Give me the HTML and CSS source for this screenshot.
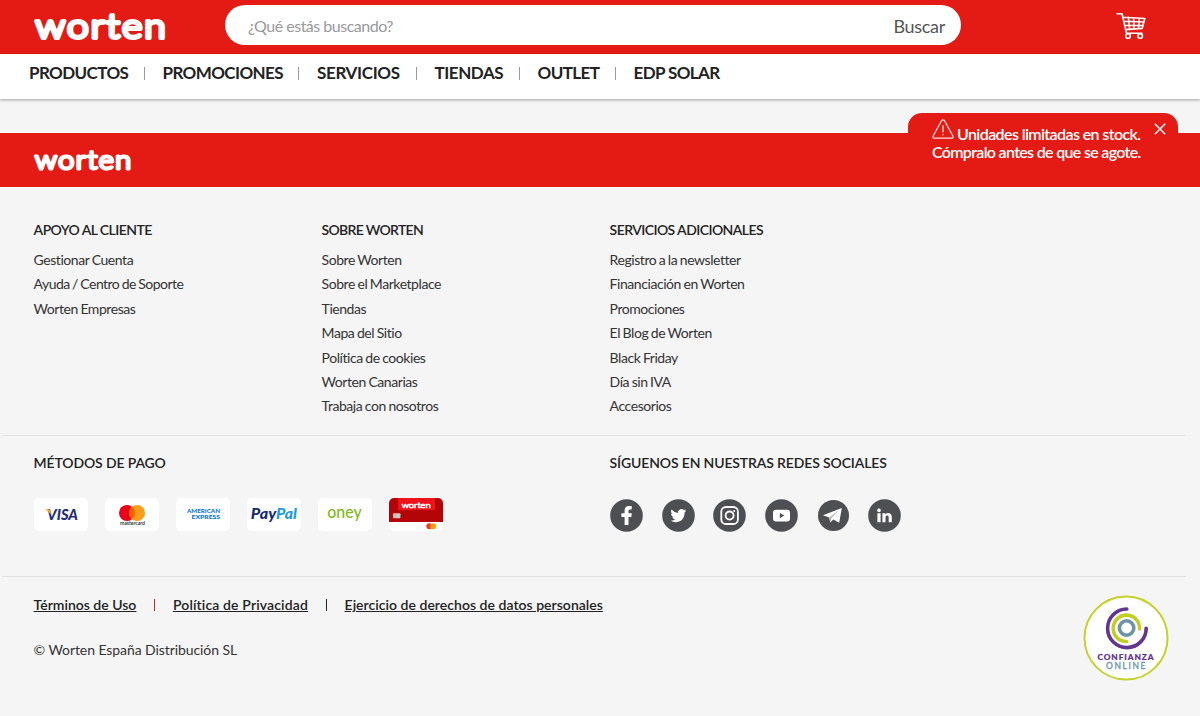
FILE: index.html
```html
<!DOCTYPE html>
<html lang="es">
<head>
<meta charset="utf-8">
<title>Worten</title>
<link rel="stylesheet" href="styles.css">
</head>
<body>
<header class="header">
  <svg class="logo" width="140" height="46" viewBox="0 0 140 46"><text class="wordmark" x="3.6" y="33.6" font-size="34" stroke-width="4" letter-spacing="1.8" textLength="132" lengthAdjust="spacingAndGlyphs">worten</text></svg>
  <div class="search"><span class="search-hint">¿Qué estás buscando?</span><span class="search-button">Buscar</span></div>
  <svg class="cart" width="30" height="28" viewBox="0 0 30 28" fill="none" stroke="#fff" stroke-width="1.6" stroke-linecap="round" stroke-linejoin="round">
    <path d="M1 1.7H6L10.6 21.2H26M6.8 5.2L28.8 6.5L26.2 16.4L9.4 17.6M7.8 9.3L28 10M8.6 13.5L27 13.3M12.4 5.6L13.6 17M17.6 6L18 17M23.4 6.3L22.4 16.6"/>
    <circle cx="12" cy="24" r="2.3"/><circle cx="24.2" cy="24" r="2.3"/>
  </svg>
</header>
<nav class="nav">
  <a class="n1">PRODUCTOS</a><a class="n2">PROMOCIONES</a><a class="n3">SERVICIOS</a><a class="n4">TIENDAS</a><a class="n5">OUTLET</a><a class="n6">EDP SOLAR</a>
</nav>
<aside class="notice">
  <svg class="warning" width="22" height="20" viewBox="0 0 22 20" fill="none" stroke="#fff" stroke-opacity=".85" stroke-width="1.3" stroke-linejoin="round" stroke-linecap="round"><path d="M9.5 1.7Q11 .1 12.5 1.7L20.9 17Q21.6 18.9 20 19.1H2Q.4 18.9 1.1 17ZM11 6.8V12.8M11 15.3V15.8"/></svg>
  <p class="notice-first">Unidades limitadas en stock.</p>
  <p class="notice-second">Cómpralo antes de que se agote.</p>
  <svg class="close" width="12" height="12" viewBox="0 0 12 12" stroke="#fff" stroke-width="1.4"><path d="M.8 .8L11.2 11.2M11.2 .8L.8 11.2"/></svg>
</aside>
<footer>
  <div class="band">
    <svg width="105" height="38" viewBox="0 0 105 38"><text class="wordmark" x="3" y="27" font-size="25" stroke-width="3" letter-spacing="1.3" textLength="97.5" lengthAdjust="spacingAndGlyphs">worten</text></svg>
  </div>
  <div class="columns">
    <section><h2>APOYO AL CLIENTE</h2>
      <ul><li>Gestionar Cuenta</li><li class="tight">Ayuda / Centro de Soporte</li><li>Worten Empresas</li></ul></section>
    <section><h2 class="tight">SOBRE WORTEN</h2>
      <ul><li>Sobre Worten</li><li>Sobre el Marketplace</li><li>Tiendas</li><li>Mapa del Sitio</li><li>Política de cookies</li><li>Worten Canarias</li><li>Trabaja con nosotros</li></ul></section>
    <section><h2>SERVICIOS ADICIONALES</h2>
      <ul><li>Registro a la newsletter</li><li>Financiación en Worten</li><li>Promociones</li><li>El Blog de Worten</li><li>Black Friday</li><li>Día sin IVA</li><li>Accesorios</li></ul></section>
  </div>
  <div class="extras">
    <section class="payments"><h2>MÉTODOS DE PAGO</h2>
      <div class="cards">
        <svg class="card" viewBox="0 0 54 33"><text x="13" y="22" font-size="15.5" font-weight="900" font-style="italic" fill="#222b76" textLength="31" lengthAdjust="spacingAndGlyphs">VISA</text><path d="M11 11.2H14.7Q16.4 11.3 16.8 13L17.6 17Q15 12.8 11 11.2" fill="#f6a22b"/></svg>
        <svg class="card" viewBox="0 0 54 33"><circle cx="22" cy="15" r="8" fill="#eb001b"/><circle cx="32" cy="15" r="8" fill="#f79e1b"/><path d="M27 8.8A8 8 0 0 1 27 21.2A8 8 0 0 1 27 8.8" fill="#ff5f00"/><text x="15" y="27.3" font-size="5" font-weight="600" fill="#222" textLength="25" lengthAdjust="spacingAndGlyphs">mastercard</text></svg>
        <svg class="card amex" viewBox="0 0 54 33"><text x="11" y="15.3" font-size="6" textLength="33" lengthAdjust="spacingAndGlyphs">AMERICAN</text><text x="15.5" y="21.3" font-size="6" textLength="28.5" lengthAdjust="spacingAndGlyphs">EXPRESS</text></svg>
        <svg class="card" viewBox="0 0 54 33"><text x="3.8" y="20.5" font-size="14.5" font-weight="900" font-style="italic" fill="#172c70" textLength="25.5" lengthAdjust="spacingAndGlyphs">Pay</text><text x="29" y="20.5" font-size="14.5" font-weight="900" font-style="italic" fill="#229bd8" textLength="21" lengthAdjust="spacingAndGlyphs">Pal</text></svg>
        <svg class="card" viewBox="0 0 54 33"><text x="9.2" y="20" font-size="16.5" font-weight="500" fill="#80b71b" textLength="34.5" lengthAdjust="spacingAndGlyphs">oney</text></svg>
        <svg class="card" viewBox="0 0 54 33"><path d="M0 0H54V24H0Z" fill="#b30508"/><path d="M9 0H46V12H9Z" fill="#ee121b"/><text class="wordmark" x="12.7" y="9.6" font-size="8.3" stroke-width=".7" textLength="29" lengthAdjust="spacingAndGlyphs">worten</text><rect x="4" y="15.2" width="7.5" height="5" rx="1" fill="#d0cbc5"/><path d="M6 16V20M4 18H8" stroke="#aaa" stroke-width=".5"/><circle cx="40.3" cy="28.2" r="3" fill="#f03a1c"/><circle cx="44.2" cy="28.2" r="3" fill="#f79e1b"/></svg>
      </div>
    </section>
    <section><h2>SÍGUENOS EN NUESTRAS REDES SOCIALES</h2>
      <div class="social">
        <svg viewBox="0 0 33 33"><circle cx="16.5" cy="16.5" r="16.3"/><path d="M14.6 26V18H11.4V14.3H14.6V11.5Q14.6 7 19 7H21.7V10.5H19.8Q18.5 10.5 18.5 12V14.3H21.8L21.3 18H18.5V26Z" fill="#fff"/></svg>
        <svg viewBox="0 0 33 33"><circle cx="16.5" cy="16.5" r="16.3"/><path d="M24.2 11.5A6 6 0 0 1 22.4 12A3.2 3.2 0 0 0 23.8 10.2A6 6 0 0 1 21.7 11A3.3 3.3 0 0 0 16.1 14A9 9 0 0 1 9.6 10.6A3.3 3.3 0 0 0 10.6 15A3 3 0 0 1 9.1 14.6A3.3 3.3 0 0 0 11.7 17.9A3 3 0 0 1 10.2 18A3.3 3.3 0 0 0 13.3 20.2A6.5 6.5 0 0 1 8.5 21.6C15 25.6 22.7 21.6 22.6 13.4A6 6 0 0 0 24.2 11.5Z" fill="#fff"/></svg>
        <svg viewBox="0 0 33 33"><circle cx="16.5" cy="16.5" r="16.3"/><g fill="none" stroke="#fff" stroke-width="1.8"><rect x="8.3" y="8" width="16.6" height="17" rx="4.6"/><circle cx="16.6" cy="16.5" r="4"/></g><circle cx="21.2" cy="12" r="1" fill="#fff"/></svg>
        <svg viewBox="0 0 33 33"><circle cx="16.5" cy="16.5" r="16.3"/><rect x="8" y="10.8" width="17" height="11.7" rx="3" fill="#fff"/><path d="M14.8 14V19.3L19.3 16.6Z"/></svg>
        <svg viewBox="0 0 33 33"><circle cx="16.5" cy="16.5" r="15.5"/><path d="M6 16.2L24.8 9L22.2 23.8L16.4 20.6L13.3 23.6L12.2 18.5Z" fill="#fff"/><path d="M12.2 18.5L21.6 11.5L14.3 19.3L13.3 23.6Z" fill="#b8b9bb"/></svg>
        <svg viewBox="0 0 33 33"><circle cx="16.5" cy="16.5" r="16.3"/><circle cx="11" cy="11.4" r="1.8" fill="#fff"/><path d="M9.4 14.2H12.6V23.3H9.4ZM14.4 14.2H17.4V15.4C19 13 23.8 13.2 23.8 18V23.3H20.7V18.5C20.7 15.7 17.5 16 17.5 18.5V23.3H14.4Z" fill="#fff"/></svg>
      </div>
    </section>
  </div>
  <div class="legal">
    <div>
      <div class="links"><a class="l1">Términos de Uso</a><i class="bar red"></i><a class="l2">Política de Privacidad</a><i class="bar"></i><a class="l3">Ejercicio de derechos de datos personales</a></div>
      <p class="copyright">© Worten España Distribución SL</p>
    </div>
    <svg class="seal" width="86" height="86" viewBox="0 0 86 86"><circle cx="43" cy="43" r="41.5" fill="#fff" stroke="#c4d22a" stroke-width="2"/>
      <g fill="none" stroke-linecap="round"><path d="M43.8 14A19.3 19.3 0 1 0 63.2 33.2" stroke="#60348f" stroke-width="3.6"/><path d="M56.6 34A13.2 13.2 0 1 0 43.6 46.5" stroke="#c1cf22" stroke-width="3.6"/><circle cx="43.6" cy="33" r="7.2" stroke="#6c94a5" stroke-width="3.6"/></g>
      <text x="14.5" y="65.3" font-size="8.3" font-weight="900" fill="#60348f" stroke="#60348f" stroke-width=".2" textLength="56">CONFIANZA</text><text x="23" y="73.8" font-size="8.5" fill="#6c94a5" stroke="#6c94a5" stroke-width=".3" textLength="39.5">ONLINE</text></svg>
  </div>
</footer>
</body>
</html>
```
FILE: styles.css
```css
* { box-sizing: border-box; }
body { margin: 0; height: 716px; overflow: hidden; background: #f5f5f5; font-family: Lato, sans-serif; color: #333; font-variant-ligatures: none; }
h2, p, ul { margin: 0; padding: 0; }
ul { list-style: none; }
svg { display: block; flex: none; }
text { font-family: Lato, sans-serif; }
.wordmark { fill: #fff; stroke: #fff; stroke-linejoin: round; font-weight: 300; }

.header { height: 54px; background: #e31b14; display: flex; align-items: flex-start; padding-left: 32px; }
.logo { margin-top: 4px; }
.search { width: 736px; height: 40px; margin: 5px 0 0 53px; padding: 1px 16px 0 23px; border-radius: 20px; background: #fff; display: flex; align-items: center; justify-content: space-between; }
.search-hint { font-size: 16px; color: #999; letter-spacing: -.5px; }
.search-button { font-size: 18px; color: #555; letter-spacing: -.3px; }
.cart { margin: 12px 0 0 155px; }

.nav { height: 45px; padding: 9px 0 0 29px; background: #fff; box-shadow: 0 1px 3px rgba(0,0,0,.35); display: flex; align-items: flex-start; font-size: 17px; line-height: 20px; font-weight: 700; letter-spacing: -.6px; color: #222; }
.nav a { display: flex; align-items: center; white-space: nowrap; }
.nav a:not(:last-child)::after { content: ""; width: 1px; height: 13px; margin-left: auto; margin-right: 17.6px; background: #999; }
.nav .n1 { width: 133.5px; }
.nav .n2 { width: 154.5px; }
.nav .n3 { width: 117.5px; letter-spacing: -.35px; }
.nav .n4 { width: 103px; letter-spacing: -.45px; }
.nav .n5 { width: 96px; }

.notice { position: absolute; left: 908px; top: 113px; width: 270px; height: 60px; padding: 12px 0 0 24px; border-radius: 14px 14px 0 0; background: #e31b14; color: #fff; font-size: 16px; line-height: 18px; font-weight: 600; white-space: nowrap; }
.notice-first { padding-left: 25px; letter-spacing: -.6px; }
.notice-second { letter-spacing: -.68px; }
.warning { position: absolute; left: 24px; top: 6px; }
.close { position: absolute; left: 246px; top: 10px; }

.band { height: 54px; margin-top: 34.4px; padding: 9px 0 0 32px; background: #e31b14; }
.columns { height: 248px; padding: 33px 0 0 33.6px; display: grid; grid-template-columns: 288px 288px 1fr; }
h2 { font-size: 14px; line-height: 20px; font-weight: 600; color: #222; white-space: nowrap; letter-spacing: -.14px; }
.columns h2 { letter-spacing: -.57px; }
.columns h2.tight { letter-spacing: -.7px; }
.columns ul { margin-top: 7.6px; font-size: 14px; line-height: 24.4px; letter-spacing: -.44px; word-spacing: -.6px; }
.columns li.tight { letter-spacing: -.53px; }
.extras { height: 141.2px; margin: 0 14px 0 2px; padding: 17px 0 0 31.6px; border: solid #e2e2e2; border-width: 1px 0; display: grid; grid-template-columns: 576px 1fr; }
.cards { display: flex; gap: 17px; margin-top: 25px; }
.card { width: 54px; height: 33px; border-radius: 5px; background: #fff; }
.amex text { font-weight: 900; fill: #0877cf; }
.social { display: flex; gap: 18.7px; margin-top: 26px; padding-left: .4px; }
.social svg { width: 33px; height: 33px; fill: #4e4f53; }
.legal { padding: 18px 31px 0 33.6px; display: flex; justify-content: space-between; font-size: 14px; }
.links { display: flex; align-items: center; line-height: 20px; font-weight: 600; color: #222; }
.links a { text-decoration: underline; white-space: nowrap; }
.l2 { letter-spacing: .14px; }
.l3 { letter-spacing: .03px; }
.bar { width: 1px; height: 12px; margin: 0 18px 0 17.6px; background: #222; }
.red { background: #a33; }
.copyright { margin-top: 25px; line-height: 20px; letter-spacing: -.08px; }
```
